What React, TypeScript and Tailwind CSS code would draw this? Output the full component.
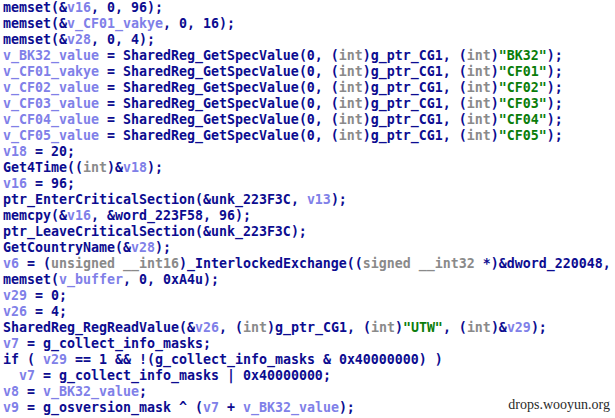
const code = [
  'memset(&v16, 0, 96);',
  'memset(&v_CF01_vakye, 0, 16);',
  'memset(&v28, 0, 4);',
  'v_BK32_value = SharedReg_GetSpecValue(0, (int)g_ptr_CG1, (int)"BK32");',
  'v_CF01_vakye = SharedReg_GetSpecValue(0, (int)g_ptr_CG1, (int)"CF01");',
  'v_CF02_value = SharedReg_GetSpecValue(0, (int)g_ptr_CG1, (int)"CF02");',
  'v_CF03_value = SharedReg_GetSpecValue(0, (int)g_ptr_CG1, (int)"CF03");',
  'v_CF04_value = SharedReg_GetSpecValue(0, (int)g_ptr_CG1, (int)"CF04");',
  'v_CF05_value = SharedReg_GetSpecValue(0, (int)g_ptr_CG1, (int)"CF05");',
  'v18 = 20;',
  'Get4Time((int)&v18);',
  'v16 = 96;',
  'ptr_EnterCriticalSection(&unk_223F3C, v13);',
  'memcpy(&v16, &word_223F58, 96);',
  'ptr_LeaveCriticalSection(&unk_223F3C);',
  'GetCountryName(&v28);',
  'v6 = (unsigned __int16)_InterlockedExchange((signed __int32 *)&dword_220048,',
  'memset(v_buffer, 0, 0xA4u);',
  'v29 = 0;',
  'v26 = 4;',
  'SharedReg_RegReadValue(&v26, (int)g_ptr_CG1, (int)"UTW", (int)&v29);',
  'v7 = g_collect_info_masks;',
  'if ( v29 == 1 && !(g_collect_info_masks & 0x40000000) )',
  '  v7 = g_collect_info_masks | 0x40000000;',
  'v8 = v_BK32_value;',
  'v9 = g_osversion_mask ^ (v7 + v_BK32_value);',
];

const types = new Set(["int", "unsigned", "__int16", "signed", "__int32"]);

type Tok = { t: string; k: "str" | "type" | "var" | "plain" };

function tokenize(line: string): Tok[] {
  const out: Tok[] = [];
  const re = /("[^"]*")|([A-Za-z_][A-Za-z0-9_]*)|([^"A-Za-z_]+)/g;
  let m: RegExpExecArray | null;
  while ((m = re.exec(line))) {
    if (m[1]) out.push({ t: m[1], k: "str" });
    else if (m[2]) {
      const w = m[2];
      if (types.has(w)) out.push({ t: w, k: "type" });
      else if (/^v\d+$/.test(w) || /^v_/.test(w)) out.push({ t: w, k: "var" });
      else out.push({ t: w, k: "plain" });
    } else out.push({ t: m[3], k: "plain" });
  }
  return out;
}

const kindClass = {
  str: "text-[#0a7d0a]",
  type: "text-[#8a8a8a]",
  var: "text-[#8080e8]",
  plain: "text-[#0c0c90]",
};

export default function App() {
  return (
    <div className="relative w-[615px] h-[418px] overflow-hidden bg-white">
      <div className="pl-[3px] font-['DejaVu_Sans_Mono',monospace] font-bold text-[13.29px] leading-4 whitespace-pre">
        {code.map((line, i) => (
          <div key={i}>
            {tokenize(line).map((tok, j) => (
              <span key={j} className={kindClass[tok.k]}>
                {tok.t}
              </span>
            ))}
          </div>
        ))}
      </div>
      <div className="absolute right-[5px] bottom-[3px] font-['Liberation_Serif',serif] text-[14px] text-[#2a2a2a]">
        drops.wooyun.org
      </div>
    </div>
  );
}
